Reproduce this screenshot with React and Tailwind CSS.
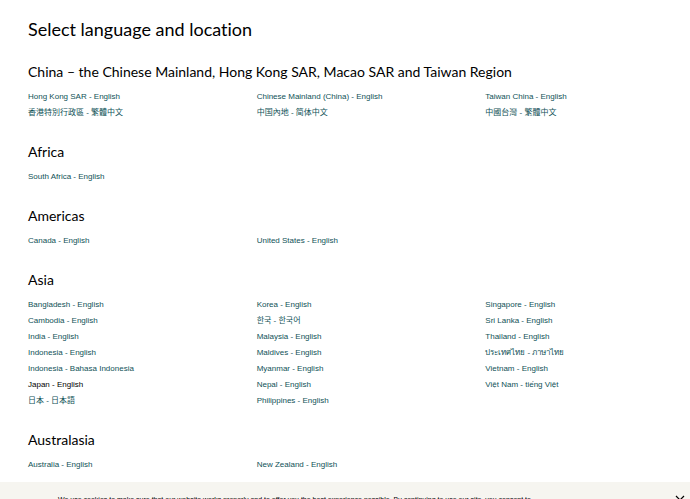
import { useState } from "react";

const regions = [
	{
		name: "China – the Chinese Mainland, Hong Kong SAR, Macao SAR and Taiwan Region",
		columns: [
			[{ label: "Hong Kong SAR - English", lang: "en-HK" }, { label: "香港特別行政區 - 繁體中文", lang: "zh-HK" }],
			[{ label: "Chinese Mainland (China) - English", lang: "en-CN" }, { label: "中国內地 - 简体中文", lang: "zh-CN" }],
			[{ label: "Taiwan China - English", lang: "en-TW" }, { label: "中國台灣 - 繁體中文", lang: "zh-TW" }],
		],
	},
	{
		name: "Africa",
		columns: [[{ label: "South Africa - English", lang: "en-ZA" }]],
	},
	{
		name: "Americas",
		columns: [[{ label: "Canada - English", lang: "en-CA" }], [{ label: "United States - English", lang: "en-US" }]],
	},
	{
		name: "Asia",
		columns: [
			[
				{ label: "Bangladesh - English", lang: "en-BD" },
				{ label: "Cambodia - English", lang: "en-KH" },
				{ label: "India - English", lang: "en-IN" },
				{ label: "Indonesia - English", lang: "en-ID" },
				{ label: "Indonesia - Bahasa Indonesia", lang: "id-ID" },
				{ label: "Japan - English", lang: "en-JP" },
				{ label: "日本 - 日本語", lang: "ja-JP" },
			],
			[
				{ label: "Korea - English", lang: "en-KR" },
				{ label: "한국 - 한국어", lang: "ko-KR" },
				{ label: "Malaysia - English", lang: "en-MY" },
				{ label: "Maldives - English", lang: "en-MV" },
				{ label: "Myanmar - English", lang: "en-MM" },
				{ label: "Nepal - English", lang: "en-NP" },
				{ label: "Philippines - English", lang: "en-PH" },
			],
			[
				{ label: "Singapore - English", lang: "en-SG" },
				{ label: "Sri Lanka - English", lang: "en-LK" },
				{ label: "Thailand - English", lang: "en-TH" },
				{ label: "ประเทศไทย - ภาษาไทย", lang: "th-TH" },
				{ label: "Vietnam - English", lang: "en-VN" },
				{ label: "Việt Nam - tiếng Việt", lang: "vi-VN" },
			],
		],
	},
	{
		name: "Australasia",
		columns: [[{ label: "Australia - English", lang: "en-AU" }], [{ label: "New Zealand - English", lang: "en-NZ" }]],
	},
];

function Region({ region, current, onSelect }) {
	return (
		<section>
			<h2 className="mb-[9px] font-['Lato','Noto_Sans',sans-serif] text-[14px] leading-4 text-black">{region.name}</h2>
			<div className="grid grid-cols-3 gap-x-13">
				{region.columns.map((links) => (
					<ul key={links[0].lang}>
						{links.map(({ label, lang }) => (
							<li key={lang} className="h-4 whitespace-nowrap leading-4">
								<a
									href={`#${lang}`}
									lang={lang}
									onClick={() => onSelect(lang)}
									className={current === lang ? "text-black" : "text-[#0f5257] hover:underline"}
								>
									{label}
								</a>
							</li>
						))}
					</ul>
				))}
			</div>
		</section>
	);
}

function CookieBar({ onClose }) {
	return (
		<aside className="flex shrink-0 items-start justify-between bg-[#f6f5f0] pt-3 pr-1 pb-4 pl-[58px] text-black">
			<p className="text-[7px] leading-3">
				We use cookies to make sure that our website works properly and to offer you the best experience possible. By
				continuing to use our site, you consent to
			</p>
			<button type="button" aria-label="Close" onClick={onClose} className="cursor-pointer">
				<svg viewBox="0 0 12 12" className="size-3" fill="none" stroke="currentColor" strokeWidth="1.2">
					<path d="M2 2l8 8M10 2l-8 8" />
				</svg>
			</button>
		</aside>
	);
}

export default function App() {
	const [current, setCurrent] = useState("en-JP");
	const [showCookies, setShowCookies] = useState(true);

	return (
		<div className="flex h-screen flex-col overflow-hidden bg-white font-['Liberation_Sans','Noto_Sans_CJK_SC','Noto_Sans',sans-serif] text-[8px]">
			<main className="shrink-0 px-7 pt-[19px] pb-[9px]">
				<h1 className="mb-[25px] font-['Lato','Noto_Sans',sans-serif] text-[18px] leading-5 text-black [font-variant-ligatures:none]">
					Select language and location
				</h1>
				<div className="flex flex-col gap-[23px]">
					{regions.map((region) => (
						<Region key={region.name} region={region} current={current} onSelect={setCurrent} />
					))}
				</div>
			</main>
			{showCookies && <CookieBar onClose={() => setShowCookies(false)} />}
		</div>
	);
}
